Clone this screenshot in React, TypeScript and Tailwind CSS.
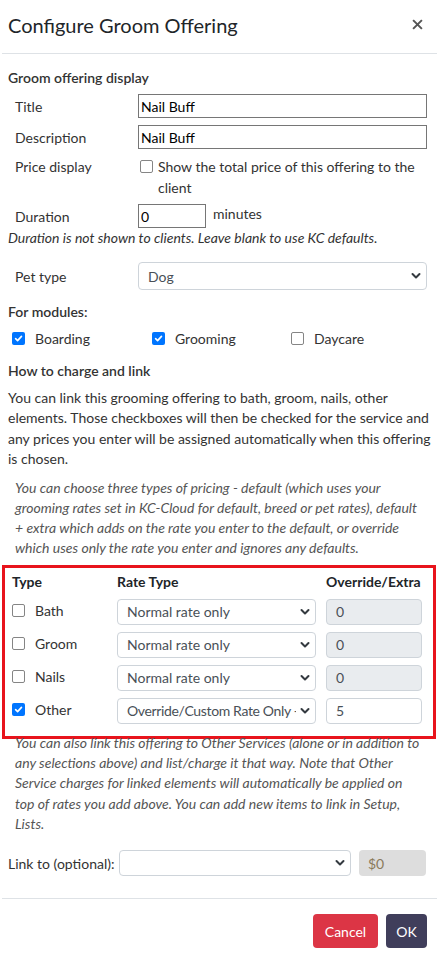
import React from "react";

function Box({ checked }: { checked?: boolean }) {
  return checked ? (
    <span className="inline-flex w-[13px] h-[13px] rounded-[2px] bg-[#0075ff] items-center justify-center shrink-0">
      <svg width="9" height="9" viewBox="0 0 10 10">
        <path d="M1.8 5.2 L4 7.4 L8.3 2.6" stroke="white" strokeWidth="1.8" fill="none" strokeLinecap="round" strokeLinejoin="round" />
      </svg>
    </span>
  ) : (
    <span className="inline-block w-[13px] h-[13px] rounded-[2px] border border-[#858585] bg-white shrink-0" />
  );
}

function Chevron() {
  return (
    <svg width="10" height="8" viewBox="0 0 10 8" className="shrink-0">
      <path d="M1.5 2 L5 5.5 L8.5 2" stroke="#343a40" strokeWidth="2" fill="none" strokeLinecap="round" strokeLinejoin="round" />
    </svg>
  );
}

function Select({ value, className, tight }: { value: string; className: string; tight?: boolean }) {
  return (
    <div className={`flex items-center border border-[#ced4da] rounded-[4px] bg-white pl-[9px] pr-[5px] ${className}`}>
      <span className={`flex-1 min-w-0 mr-[4px] overflow-hidden whitespace-nowrap text-[#495057] ${tight ? "tracking-[-0.35px]" : ""}`}>{value}</span>
      <Chevron />
    </div>
  );
}

export default function App() {
  const rows = [
    { t: "Bath", v: "Normal rate only", n: "0", c: false, d: true },
    { t: "Groom", v: "Normal rate only", n: "0", c: false, d: true },
    { t: "Nails", v: "Normal rate only", n: "0", c: false, d: true },
    { t: "Other", v: "Override/Custom Rate Only -", n: "5", c: true, d: false },
  ];
  return (
    <div className="w-[439px] h-[963px] bg-white font-['Lato','Liberation_Sans',sans-serif] text-[14px] text-[#212529] overflow-hidden">
      <div className="h-[54px] mx-[2px] border-b border-[#dee2e6] flex items-center justify-between pl-[6px] pr-[14px]">
        <div className="text-[20px] leading-[24px] text-[#212529] -mt-[4px]">Configure Groom Offering</div>
        <svg width="11" height="11" viewBox="0 0 10 10" className="-mt-[4px]">
          <path d="M1 1 L9 9 M9 1 L1 9" stroke="#555" strokeWidth="1.8" />
        </svg>
      </div>
      <div className="px-[8px]">
        <div className="mt-[14px] h-[20px] leading-[20px] font-semibold text-[#333]">Groom offering display</div>
        <div className="mt-[6px] flex items-center h-[24px]">
          <div className="w-[130px] pl-[7px] text-[#333]">Title</div>
          <input readOnly value="Nail Buff" className="w-[289px] h-[24px] border border-[#767676] px-[2px] text-[#000] outline-none" />
        </div>
        <div className="mt-[7px] flex items-center h-[24px]">
          <div className="w-[130px] pl-[7px] text-[#333]">Description</div>
          <input readOnly value="Nail Buff" className="w-[289px] h-[24px] border border-[#767676] px-[2px] text-[#000] outline-none" />
        </div>
        <div className="mt-[7px] flex">
          <div className="w-[130px] pl-[7px] text-[#333] leading-[21px]">Price display</div>
          <div className="flex-1 flex">
            <div className="w-[20px] h-[21px] flex items-center pl-[2px]"><Box /></div>
            <div className="leading-[21px] text-[#333] w-[260px]">Show the total price of this offering to the client</div>
          </div>
        </div>
        <div className="mt-[6px] flex items-start h-[24px]">
          <div className="w-[130px] pl-[7px] text-[#333] leading-[24px] mt-[1px]">Duration</div>
          <input readOnly value="0" className="w-[68px] h-[24px] border border-[#767676] px-[2px] text-[#000] outline-none" />
          <div className="ml-[7px] leading-[20px] text-[#333]">minutes</div>
        </div>
        <div className="h-[20px] leading-[20px] italic text-[#333]">Duration is not shown to clients. Leave blank to use KC defaults.</div>
        <div className="mt-[14px] flex items-center h-[28px]">
          <div className="w-[130px] pl-[7px] text-[#333]">Pet type</div>
          <Select value="Dog" className="w-[289px] h-[28px]" />
        </div>
        <div className="mt-[12px] h-[20px] leading-[20px] font-semibold text-[#333]">For modules:</div>
        <div className="mt-[6px] flex items-center h-[20px] text-[#333]">
          <div className="w-[144px] flex items-center pl-[4px]"><Box checked /><span className="ml-[10px]">Boarding</span></div>
          <div className="w-[139px] flex items-center"><Box checked /><span className="ml-[10px]">Grooming</span></div>
          <div className="flex items-center"><Box /><span className="ml-[10px]">Daycare</span></div>
        </div>
        <div className="mt-[13px] h-[20px] leading-[20px] font-semibold text-[#333]">How to charge and link</div>
        <p className="mt-[7px] leading-[20.4px] text-[#333]">
          You can link this grooming offering to bath, groom, nails, other<br />
          elements. Those checkboxes will then be checked for the service and<br />
          any prices you enter will be assigned automatically when this offering<br />
          is chosen.
        </p>
        <p className="mt-[8px] pl-[7px] leading-[20px] italic text-[#555] whitespace-nowrap">
          You can choose three types of pricing - default (which uses your<br />
          grooming rates set in KC-Cloud for default, breed or pet rates), default<br />
          + extra which adds on the rate you enter to the default, or override<br />
          which uses only the rate you enter and ignores any defaults.
        </p>
      </div>
      <div className="mt-[7px] ml-[2px] w-[434px] border-[3px] border-[#e8141c] pt-[4px] pb-[11px] pl-[7px]">
        <div className="flex h-[20px] leading-[20px] font-bold text-[#212529]">
          <div className="w-[105px]">Type</div>
          <div className="w-[209px]">Rate Type</div>
          <div>Override/Extra</div>
        </div>
        {rows.map((r) => (
          <div key={r.t} className="mt-[7px] mb-[1px] flex h-[26px]">
            <div className="w-[105px] flex items-start pt-[5px] text-[#333]">
              <Box checked={r.c} />
              <span className="ml-[10px] leading-[13px]">{r.t}</span>
            </div>
            <Select value={r.v} tight={r.c} className="w-[199px] h-[26px]" />
            <div className={`ml-[10px] w-[96px] h-[26px] border border-[#ced4da] rounded-[4px] pl-[9px] flex items-center text-[#495057] ${r.d ? "bg-[#e9ecef]" : "bg-white"}`}>{r.n}</div>
          </div>
        ))}
      </div>
      <div className="px-[8px]">
        <p className="-mt-[6px] pl-[7px] leading-[20.3px] italic text-[#555] whitespace-nowrap">
          You can also link this offering to Other Services (alone or in addition to<br />
          any selections above) and list/charge it that way. Note that Other<br />
          Service charges for linked elements will automatically be applied on<br />
          top of rates you add above. You can add new items to link in Setup,<br />
          Lists.
        </p>
        <div className="mt-[16px] flex items-center h-[26px]">
          <div className="w-[111px] text-[#333]">Link to (optional):</div>
          <Select value="" className="w-[232px] h-[26px]" />
          <div className="ml-[8px] w-[67px] h-[26px] rounded-[4px] bg-[#dddddd] pl-[9px] flex items-center text-[#8a7a5a]">$0</div>
        </div>
      </div>
      <div className="mt-[22px] mx-[2px] border-t border-[#dee2e6] flex justify-end gap-[8px] pr-[10px] pt-[15px]">
        <div className="w-[65px] h-[34px] rounded-[4px] bg-[#dc3545] text-white flex items-center justify-center">Cancel</div>
        <div className="w-[41px] h-[34px] rounded-[4px] bg-[#403e5b] text-white flex items-center justify-center">OK</div>
      </div>
    </div>
  );
}
